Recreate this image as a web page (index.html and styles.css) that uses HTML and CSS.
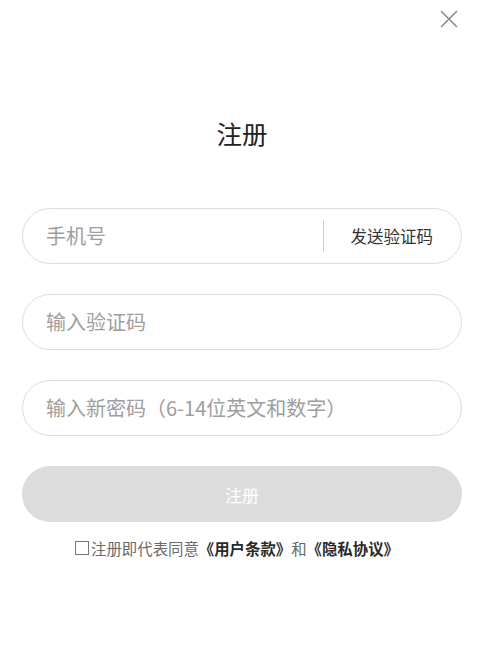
FILE: index.html
```html
<!DOCTYPE html>
<html lang="zh-CN">
<head>
<meta charset="utf-8">
<title>注册</title>
<link rel="stylesheet" href="styles.css">
</head>
<body>
<div class="page">
  <div class="topbar">
    <span class="close" aria-label="关闭">
      <svg width="18" height="18" viewBox="0 0 18 18"><path d="M1.5 1.5 L16.5 16.5 M16.5 1.5 L1.5 16.5" stroke="#8c8c8c" stroke-width="1.6" fill="none" stroke-linecap="round"/></svg>
    </span>
  </div>
  <h1 class="title">注册</h1>
  <div class="form">
    <div class="field">
      <span class="placeholder">手机号</span>
      <span class="divider"></span>
      <span class="send">发送验证码</span>
    </div>
    <div class="field">
      <span class="placeholder">输入验证码</span>
    </div>
    <div class="field">
      <span class="placeholder">输入新密码（6-14位英文和数字）</span>
    </div>
    <div class="submit">注册</div>
  </div>
  <p class="agree"><span class="check"></span>注册即代表同意<b class="link">《用户条款》</b>和<b class="link">《隐私协议》</b></p>
</div>
</body>
</html>
```

FILE: styles.css
```css
html, body {
  margin: 0;
  padding: 0;
  background: #ffffff;
}
body {
  font-family: "Noto Sans CJK SC", "Noto Sans", "Liberation Sans", sans-serif;
  color: #222;
}
.page {
  width: 486px;
  height: 653px;
  padding: 0 24px 0 22px;
  box-sizing: border-box;
  display: flex;
  flex-direction: column;
}
.topbar {
  height: 36px;
  display: flex;
  justify-content: flex-end;
  align-items: flex-start;
  padding-top: 10px;
  box-sizing: border-box;
}
.close {
  width: 18px;
  height: 18px;
  margin-right: 4px;
  display: block;
}
.close svg { display: block; }
.title {
  margin: 80px 0 0;
  height: 34px;
  line-height: 34px;
  font-size: 25.5px;
  font-weight: 400;
  text-align: center;
  color: #222;
}
.form {
  margin-top: 58px;
  display: flex;
  flex-direction: column;
  gap: 30px;
}
.field {
  height: 56px;
  border: 1px solid #dcdcdc;
  border-radius: 28px;
  box-sizing: border-box;
  display: flex;
  align-items: center;
  padding: 0 28px 0 23px;
}
.placeholder {
  flex: 1;
  font-size: 20px;
  color: #9e9e9e;
  line-height: 24px;
}
.divider {
  width: 1px;
  height: 32px;
  background: #d0d0d0;
  margin-right: 27px;
}
.send {
  font-size: 16.5px;
  color: #333;
  line-height: 24px;
}
.submit {
  height: 56px;
  border-radius: 28px;
  background: #dcdcdc;
  color: #ffffff;
  font-size: 17px;
  display: flex;
  align-items: center;
  justify-content: center;
}
.agree {
  margin: 16px 0 0;
  padding-right: 10px;
  line-height: 20px;
  font-size: 15.4px;
  color: #6a6a6a;
  text-align: center;
  display: flex;
  justify-content: center;
  align-items: center;
}
.check {
  width: 12px;
  height: 12px;
  border: 1px solid #777;
  display: inline-block;
  margin-right: 2px;
}
.link {
  color: #2a2a2a;
  font-weight: 700;
}
```
